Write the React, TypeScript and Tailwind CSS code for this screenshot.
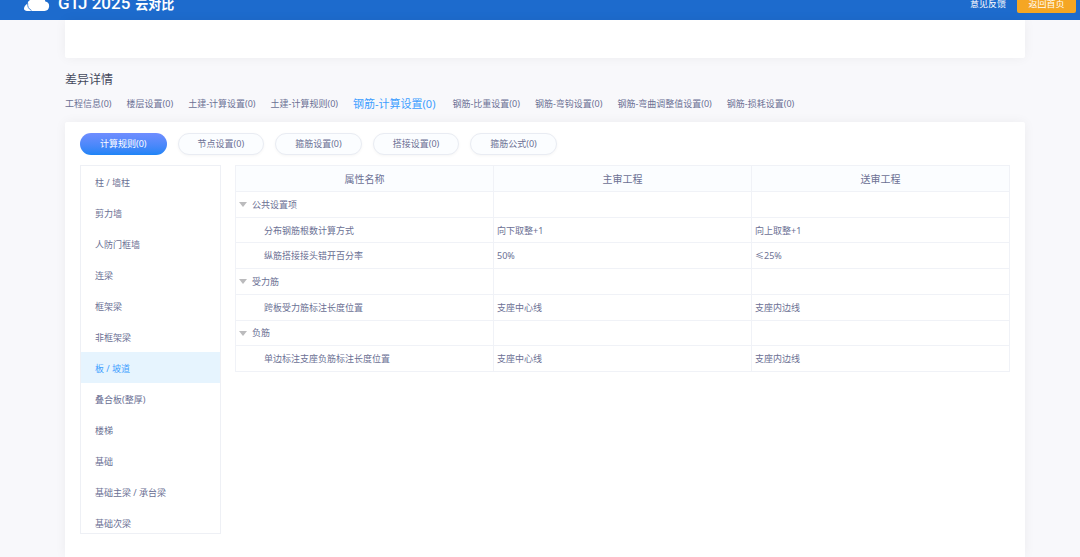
import { useState } from 'react';

const sections = [
  '工程信息(0)',
  '楼层设置(0)',
  '土建-计算设置(0)',
  '土建-计算规则(0)',
  '钢筋-计算设置(0)',
  '钢筋-比重设置(0)',
  '钢筋-弯钩设置(0)',
  '钢筋-弯曲调整值设置(0)',
  '钢筋-损耗设置(0)',
];

const ruleTabs = [
  '计算规则(0)',
  '节点设置(0)',
  '箍筋设置(0)',
  '搭接设置(0)',
  '箍筋公式(0)',
];

const components = [
  '柱 / 墙柱',
  '剪力墙',
  '人防门框墙',
  '连梁',
  '框架梁',
  '非框架梁',
  '板 / 坡道',
  '叠合板(整厚)',
  '楼梯',
  '基础',
  '基础主梁 / 承台梁',
  '基础次梁',
];

const headers = ['属性名称', '主审工程', '送审工程'];

const groups = [
  {
    name: '公共设置项',
    rows: [
      { name: '分布钢筋根数计算方式', main: '向下取整+1', sent: '向上取整+1' },
      { name: '纵筋搭接接头错开百分率', main: '50%', sent: '≤25%' },
    ],
  },
  {
    name: '受力筋',
    rows: [
      { name: '跨板受力筋标注长度位置', main: '支座中心线', sent: '支座内边线' },
    ],
  },
  {
    name: '负筋',
    rows: [
      { name: '单边标注支座负筋标注长度位置', main: '支座中心线', sent: '支座内边线' },
    ],
  },
];

function Header() {
  return (
    <header className="h-5 shrink-0 overflow-hidden bg-[#1d6bcd] pl-6 pr-1 flex items-end justify-between text-white">
      <div className="flex items-end">
        <svg viewBox="0 0 26 20" className="w-[26px] h-5 mb-2" aria-hidden="true">
          <path
            fill="#fff"
            d="M3 19h17.500a4.800 4.800 0 0 0 .8-9.500A7.400 7.400 0 0 0 7.300 7.600C5 8 3.800 9.600 3.700 11.600 1.600 13 .2 14.800 0 16.500-.1 18 1.200 19 3 19Z"
          />
          <path
            fill="none"
            stroke="#1d6bcd"
            strokeWidth="0.8"
            d="M3.700 11.200c-.4 3.200.8 5.800 3.800 7.200"
          />
        </svg>
        <h1 className="ml-2 mb-[5px] flex items-baseline gap-[5px] text-[17px] leading-5 font-medium whitespace-nowrap font-['Roboto','Noto_Sans_CJK_SC',sans-serif]">
          GTJ 2025 <span className="text-[13px] leading-5 font-bold">云对比</span>
        </h1>
      </div>
      <div className="flex items-end gap-[11px] mb-[7px] text-[9px] leading-[18px]">
        <a href="#feedback">意见反馈</a>
        <button className="w-[59px] rounded-xs bg-[#f5a623] text-center">
          返回首页
        </button>
      </div>
    </header>
  );
}

function RuleTable() {
  const [closed, setClosed] = useState<string[]>([]);

  const toggle = (name: string) =>
    setClosed((c) =>
      c.includes(name) ? c.filter((n) => n !== name) : [...c, name],
    );

  return (
    <table className="flex-1 w-full h-[207px] table-fixed border-collapse text-[9px] leading-3 text-left">
      <thead>
        <tr className="h-[26px] bg-[#fbfdff]">
          {headers.map((h) => (
            <th
              key={h}
              className="border border-[#f0f2f7] pt-px text-center text-[10px] leading-3 font-normal"
            >
              {h}
            </th>
          ))}
        </tr>
      </thead>
      {groups.map((group) => (
        <tbody key={group.name}>
          <tr>
            <td className="border border-[#f0f2f7] pt-px pl-[3px]">
              <button
                onClick={() => toggle(group.name)}
                aria-expanded={!closed.includes(group.name)}
                className="flex items-center gap-[5px] cursor-pointer"
              >
                <svg viewBox="0 0 8 5" className="w-2 h-[5px]" aria-hidden="true">
                  <path d="M0 0h8L4 5Z" fill="#bbbbbd" />
                </svg>
                {group.name}
              </button>
            </td>
            <td className="border border-[#f0f2f7]" />
            <td className="border border-[#f0f2f7]" />
          </tr>
          {!closed.includes(group.name) &&
            group.rows.map((row) => (
              <tr key={row.name}>
                <td className="border border-[#f0f2f7] pt-px pl-7">{row.name}</td>
                <td className="border border-[#f0f2f7] pt-px pl-[3px]">{row.main}</td>
                <td className="border border-[#f0f2f7] pt-px pl-[3px]">{row.sent}</td>
              </tr>
            ))}
        </tbody>
      ))}
    </table>
  );
}

export default function App() {
  const [section, setSection] = useState('钢筋-计算设置(0)');
  const [ruleTab, setRuleTab] = useState('计算规则(0)');
  const [component, setComponent] = useState('板 / 坡道');

  return (
    <div className="min-h-screen flex flex-col bg-[#f8f8fb] text-[#6b7094] font-['Noto_Sans','Noto_Sans_CJK_SC',sans-serif]">
      <Header />
      <main className="flex-1 flex flex-col pl-[65px] pr-[55px]">
        <div className="h-[38px] rounded-b-xs bg-white shadow-[0_0_12px_rgba(0,0,0,0.05)]" />

        <h2 className="mt-[13px] text-[12px] leading-[18px] text-[#44485c]">差异详情</h2>

        <nav className="mt-[7px] h-4 flex items-center gap-[15px] text-[9px] leading-4 whitespace-nowrap">
          {sections.map((s) => (
            <button
              key={s}
              onClick={() => setSection(s)}
              className={`cursor-pointer ${
                section === s ? 'pr-[2px] text-[11px] text-[#409eff]' : ''
              }`}
            >
              {s}
            </button>
          ))}
        </nav>

        {/* Detail card */}
        <section className="mt-[10px] flex-1 rounded-t-xs bg-white px-[15px] pt-[11px] pb-[23px] shadow-[0_0_12px_rgba(0,0,0,0.05)]">
          <div className="flex gap-[11px] text-[9px] leading-5">
            {ruleTabs.map((t) => (
              <button
                key={t}
                onClick={() => setRuleTab(t)}
                className={`px-[19px] rounded-full border whitespace-nowrap cursor-pointer ${
                  ruleTab === t
                    ? 'border-transparent bg-linear-to-b from-[#6f8dff] to-[#1c84f6] bg-origin-border text-white'
                    : 'border-[#e9ecf3] bg-[#fbfdff] shadow-[0_1px_3px_rgba(0,0,0,0.04)]'
                }`}
              >
                {t}
              </button>
            ))}
          </div>

          <div className="mt-[10px] flex items-start gap-[14px]">
            <ul className="w-[141px] h-[369px] shrink-0 overflow-hidden border border-[#eef0f5] text-[9px] leading-[29px]">
              {components.map((c) => (
                <li key={c}>
                  <button
                    onClick={() => setComponent(c)}
                    className={`block w-full pt-[2px] pl-[14px] text-left cursor-pointer ${
                      component === c ? 'bg-[#e6f4fe] text-[#409eff]' : ''
                    }`}
                  >
                    {c}
                  </button>
                </li>
              ))}
            </ul>
            <RuleTable />
          </div>
        </section>
      </main>
    </div>
  );
}
